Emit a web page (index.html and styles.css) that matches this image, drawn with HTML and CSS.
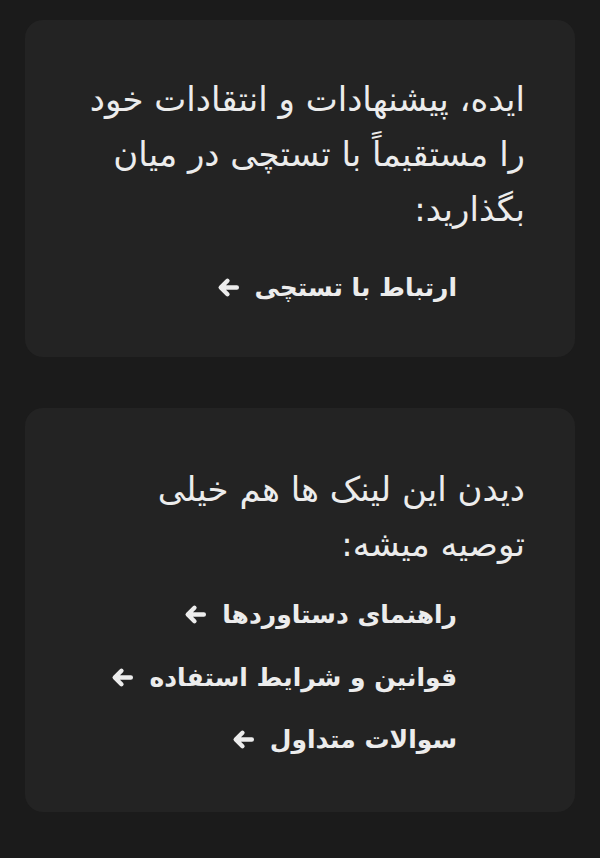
FILE: index.html
```html
<!DOCTYPE html>
<html lang="fa" dir="rtl">
<head>
<meta charset="utf-8">
<link rel="stylesheet" href="styles.css">
</head>
<body>
<main class="page">
  <section class="card card-contact">
    <p class="lead">ایده، پیشنهادات و انتقادات خود<br>را مستقیماً با تستچی در میان<br>بگذارید:</p>
    <ul class="links">
      <li><a class="link" href="#">ارتباط با تستچی <svg class="arrow" viewBox="0 0 24 24"><path d="M20 12H5M11 5.5L4.5 12l6.5 6.5"/></svg></a></li>
    </ul>
  </section>
  <section class="card card-links">
    <p class="lead">دیدن این لینک ها هم خیلی<br>توصیه میشه:</p>
    <ul class="links">
      <li><a class="link" href="#">راهنمای دستاوردها <svg class="arrow" viewBox="0 0 24 24"><path d="M20 12H5M11 5.5L4.5 12l6.5 6.5"/></svg></a></li>
      <li><a class="link" href="#">قوانین و شرایط استفاده <svg class="arrow" viewBox="0 0 24 24"><path d="M20 12H5M11 5.5L4.5 12l6.5 6.5"/></svg></a></li>
      <li><a class="link" href="#">سوالات متداول <svg class="arrow" viewBox="0 0 24 24"><path d="M20 12H5M11 5.5L4.5 12l6.5 6.5"/></svg></a></li>
    </ul>
  </section>
</main>
</body>
</html>
```
FILE: styles.css
```css
* { box-sizing: border-box; }
html, body {
  margin: 0;
  background: #1b1b1b;
  color: #ececec;
  font-family: "DejaVu Sans", "Noto Sans", sans-serif;
}
.page {
  display: flex;
  flex-direction: column;
  gap: 51px;
  padding: 20px 25px 0;
}
.card {
  background: #232323;
  border-radius: 18px;
  padding: 52px 50px 50px;
}
.card-links {
  padding-top: 54px;
  padding-bottom: 52px;
}
.lead {
  margin: 0;
  font-size: 34px;
  line-height: 55px;
}
.links {
  list-style: none;
  margin: 30px 68px 0 0;
  padding: 0;
  display: flex;
  flex-direction: column;
  gap: 22.5px;
}
.card-links .links { margin-top: 22.5px; }
.link {
  display: inline-flex;
  align-items: center;
  gap: 14px;
  height: 40px;
  color: #ececec;
  text-decoration: none;
  font-size: 25px;
  font-weight: bold;
}
.arrow {
  width: 25px;
  height: 25px;
  fill: none;
  stroke: #ececec;
  stroke-width: 4.2;
  stroke-linecap: round;
  stroke-linejoin: round;
}
```
